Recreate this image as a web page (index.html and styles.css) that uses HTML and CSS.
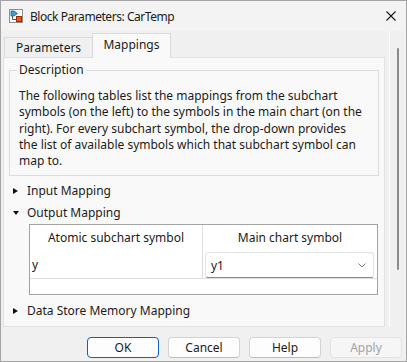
FILE: index.html
```html
<!DOCTYPE html>
<html>
<head>
<meta charset='utf-8'/>
<link rel="stylesheet" href="styles.css">
</head>
<body>
<div class='window'>
<div class='titlebar'>
<svg class='app-icon' width='14' height='14' viewBox='0 0 14 14'>
<rect x='0.5' y='0.5' width='13' height='13' fill='#fbfbfb' stroke='#8e8e8e'/>
<path d='M3.5 6 V10.5 H7' stroke='#5a5a5a' fill='none'/>
<path d='M2 2 H5 L8.5 4.5 L5 7 H2 Z' fill='#3a9be0' stroke='#1d5f9e' stroke-width='0.8'/>
<rect x='7.5' y='7.5' width='5' height='5' fill='#ec5a1c' stroke='#9c2a00'/>
</svg>
<span class='title'>Block Parameters: CarTemp</span>
<svg class='close' width='10' height='10' viewBox='0 0 10 10'>
<path d='M0.5 0.5 L9.5 9.5 M9.5 0.5 L0.5 9.5' stroke='#1a1a1a' stroke-width='1.1'/>
</svg>
</div>
<div class='main'>
<div class='content'>
<div class='tabs'>
<div class='tab'>Parameters</div>
<div class='tab active'>Mappings</div>
</div>
<div class='panel'>
<fieldset class='description'>
<legend>Description</legend>
<p>The following tables list the mappings from the subchart<br>symbols (on the left) to the symbols in the main chart (on the<br>right). For every subchart symbol, the drop-down provides<br>the list of available symbols which that subchart symbol can<br>map to.</p>
</fieldset>
<div class='section'><span class='caret'><span class='tri-right'></span></span>Input Mapping</div>
<div class='section'><span class='caret'><span class='tri-down'></span></span>Output Mapping</div>
<div class='mapping'>
<div class='row head'>
<div class='cell left'>Atomic subchart symbol</div>
<div class='cell'>Main chart symbol</div>
</div>
<div class='row data'>
<div class='cell left name'>y</div>
<div class='cell'>
<div class='combo'><span>y1</span>
<svg width='8' height='5' viewBox='0 0 8 5'><path d='M0.5 0.5 L4 4 L7.5 0.5' stroke='#7a7a7a' fill='none'/></svg>
</div>
</div>
</div>
</div>
<div class='section store'><span class='caret'><span class='tri-right'></span></span>Data Store Memory Mapping</div>
</div>
</div>
<div class='scrollbar'><div class='thumb'></div></div>
</div>
<div class='buttons'>
<button class='btn default'>OK</button>
<button class='btn'>Cancel</button>
<button class='btn'>Help</button>
<button class='btn' disabled>Apply</button>
</div>
</div>
</body>
</html>
```

FILE: styles.css
```css
body {
    margin: 0;
    font-family: "Noto Sans", sans-serif;
    font-size: 12px;
    color: #1b1b1b;
}
div.window {
    width: 407px;
    height: 362px;
    box-sizing: border-box;
    border: 1px solid #a4a4a4;
    background: #f0f0f0;
    display: flex;
    flex-direction: column;
}
div.titlebar {
    height: 30px;
    flex: none;
    background: #f3f3f3;
    display: flex;
    align-items: center;
    padding-left: 8px;
}
span.title {
    flex: 1;
    margin-left: 7px;
    letter-spacing: -0.45px;
}
svg.close {
    margin-right: 10px;
}
div.main {
    height: 296px;
    flex: none;
    display: flex;
}
div.content {
    width: 388px;
}
div.tabs {
    height: 26px;
    display: flex;
    align-items: flex-end;
    padding-left: 3px;
}
div.tab {
    box-sizing: border-box;
    height: 20px;
    width: 88px;
    border: 1px solid #dadada;
    border-bottom: none;
    border-right: none;
    text-align: center;
    line-height: 19px;
    background: #f0f0f0;
}
div.tab.active {
    width: 79px;
    height: 25px;
    border-right: 1px solid #dadada;
    margin-bottom: -1px;
    line-height: 22px;
    background: #f9f9f9;
    position: relative;
    z-index: 1;
}
div.panel {
    box-sizing: border-box;
    margin-left: 2px;
    width: 382px;
    height: 270px;
    border: 1px solid #e2e2e2;
    background: #f9f9f9;
    padding-top: 4px;
}
fieldset.description {
    margin: 0 5px 0 5px;
    padding: 0 6px 6px 7px;
    border: 1px solid #dcdcdc;
}
fieldset.description legend {
    padding: 0 2px;
    line-height: 16px;
}
fieldset.description p {
    margin: 10px 0 0 2px;
    line-height: 16.25px;
    white-space: nowrap;
}
div.section {
    height: 22px;
    line-height: 22px;
    display: flex;
    align-items: center;
    padding-left: 9px;
}
div.section:first-of-type {
    margin-top: 4px;
}
div.section.store {
    margin-top: 5px;
}
span.caret {
    width: 7px;
    height: 7px;
    margin-right: 7px;
    display: flex;
    align-items: center;
}
span.tri-right {
    border-left: 5px solid #111;
    border-top: 3.5px solid transparent;
    border-bottom: 3.5px solid transparent;
}
span.tri-down {
    border-top: 4px solid #111;
    border-left: 3.5px solid transparent;
    border-right: 3.5px solid transparent;
}
div.mapping {
    box-sizing: border-box;
    margin: 0 6px 0 25px;
    height: 71px;
    border: 1px solid #a3a3a3;
    background: #fff;
}
div.row {
    display: grid;
    grid-template-columns: 173px 1fr;
}
div.row.head {
    height: 26px;
    line-height: 26px;
    text-align: center;
}
div.row.data {
    height: 27px;
    border-bottom: 1px solid #dedede;
}
div.cell.left {
    border-right: 1px solid #dedede;
}
div.cell.name {
    line-height: 27px;
    padding-left: 2px;
}
div.combo {
    box-sizing: border-box;
    height: 26px;
    margin: 1px 3px 0 2px;
    border: 1px solid #e3e3e3;
    border-bottom-color: #8a8a8a;
    border-radius: 3px;
    display: flex;
    align-items: center;
    justify-content: space-between;
    padding: 0 7px 0 5px;
    background: #fff;
}
div.scrollbar {
    flex: 1;
    border-left: 1px solid #fff;
}
div.thumb {
    width: 2px;
    height: 222px;
    margin: 17px 0 0 7px;
    border-radius: 1px;
    background: #8a8a8a;
}
div.buttons {
    display: flex;
    justify-content: flex-end;
    gap: 9px;
    padding: 10px 4px 0 0;
}
button.btn {
    box-sizing: border-box;
    width: 72px;
    height: 21px;
    padding: 0;
    font-family: "Noto Sans", sans-serif;
    font-size: 12px;
    color: #1b1b1b;
    background: #fdfdfd;
    border: 1px solid #d3d3d3;
    border-bottom-color: #bcbcbc;
    border-radius: 4px;
}
button.btn.default {
    border: 1px solid #0a63c2;
}
button.btn:disabled {
    color: #a3a3a3;
    background: #f6f6f6;
    border-color: #e3e3e3;
}
```
